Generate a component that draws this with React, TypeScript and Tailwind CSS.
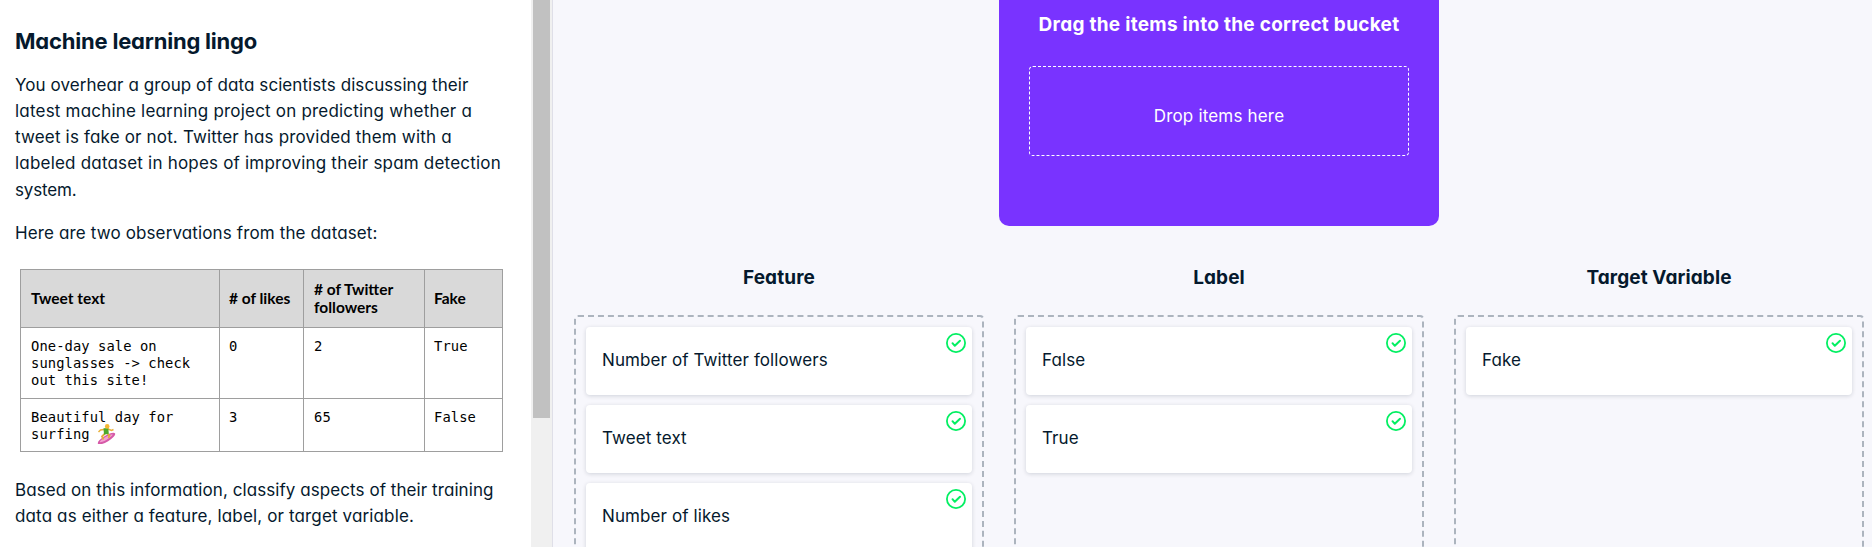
type Line = { text: string; spacing: string };

const intro: Line[] = [
  { text: "You overhear a group of data scientists discussing their", spacing: "tracking-[0.07px]" },
  { text: "latest machine learning project on predicting whether a", spacing: "tracking-[0.2px]" },
  { text: "tweet is fake or not. Twitter has provided them with a", spacing: "tracking-[0.17px]" },
  { text: "labeled dataset in hopes of improving their spam detection", spacing: "tracking-[0.2px]" },
  { text: "system.", spacing: "tracking-[-0.15px]" },
];
const observations: Line[] = [
  { text: "Here are two observations from the dataset:", spacing: "tracking-[0.13px]" },
];
const task: Line[] = [
  { text: "Based on this information, classify aspects of their training", spacing: "tracking-[0.07px]" },
  { text: "data as either a feature, label, or target variable.", spacing: "tracking-[0.14px]" },
];

const buckets = [
  { title: "Feature", items: ["Number of Twitter followers", "Tweet text", "Number of likes"] },
  { title: "Label", items: ["False", "True"] },
  { title: "Target Variable", items: ["Fake"] },
];

function Paragraph({ lines, className }: { lines: Line[]; className: string }) {
  return (
    <p className={`text-[17px] leading-[26.15px] whitespace-nowrap ${className}`}>
      {lines.map((l) => (
        <span key={l.text} className={`block ${l.spacing}`}>{l.text}</span>
      ))}
    </p>
  );
}

function Surfer() {
  return (
    <svg viewBox="0 0 19 20" className="absolute left-[66px] top-[15px] h-[20px] w-[19px]">
      <ellipse cx="9.5" cy="14.6" rx="10" ry="3.1" transform="rotate(-31 9.5 14.6)" fill="#d65aa8" />
      <ellipse cx="9.3" cy="14.2" rx="7.4" ry="1.4" transform="rotate(-31 9.3 14.2)" fill="#f3a0d2" />
      <path d="M7.5 10 L5 12.5 L6.5 15.5 M10.5 10 L12.5 11.5 L11.5 14" fill="none" stroke="#e3aa3c" strokeWidth="1.8" />
      <path d="M7 5.5 L3.5 6 L1.5 8 M11 5 L14.5 6.5 L16.5 5.5" fill="none" stroke="#eab13c" strokeWidth="1.5" />
      <path d="M6.5 4.2 L11.3 4 L11.8 9.8 L7 10.8 Z" fill="#4fa82c" />
      <circle cx="10.2" cy="2.4" r="2.3" fill="#f5b733" />
    </svg>
  );
}

function CheckIcon() {
  return (
    <svg viewBox="0 0 20 20" className="absolute top-[6px] right-[6px] h-5 w-5" fill="none" stroke="#03ef62">
      <circle cx="10" cy="10" r="9.1" strokeWidth="1.8" />
      <path d="M6.5 10.2 L8.8 12.8 L14 7.8" strokeWidth="2" strokeLinecap="round" strokeLinejoin="round" />
    </svg>
  );
}

function ObservationsTable() {
  return (
    <table className="mt-[23px] ml-[5px] w-[482px] table-fixed border-collapse text-left text-black">
      <colgroup>
        <col className="w-[199px]" />
        <col className="w-[84px]" />
        <col className="w-[121px]" />
        <col className="w-[78px]" />
      </colgroup>
      <thead className="bg-[#d9d9d9] font-['Lato',sans-serif] text-[15.5px] leading-[18.5px] font-bold whitespace-nowrap">
        <tr className="h-[58px]">
          <th className="border border-[#9e9e9e] pl-[10px]">Tweet text</th>
          <th className="border border-[#9e9e9e] pl-[9px]"># of likes</th>
          <th className="border border-[#9e9e9e] pl-[10px]"># of Twitter<br />followers</th>
          <th className="border border-[#9e9e9e] pl-[9px]">Fake</th>
        </tr>
      </thead>
      <tbody className="align-top font-['DejaVu_Sans_Mono',monospace] text-[13.8px] leading-[17px] tracking-[0.07px] whitespace-nowrap">
        <tr className="h-[71px]">
          <td className="border border-[#9e9e9e] pt-[10px] pl-[10px]">One-day sale on<br />sunglasses -&gt; check<br />out this site!</td>
          <td className="border border-[#9e9e9e] pt-[10px] pl-[9px]">0</td>
          <td className="border border-[#9e9e9e] pt-[10px] pl-[10px]">2</td>
          <td className="border border-[#9e9e9e] pt-[10px] pl-[9px]">True</td>
        </tr>
        <tr className="h-[53px]">
          <td className="border border-[#9e9e9e] pt-[10px] pl-[10px]">
            <div className="relative">Beautiful day for<br />surfing<Surfer /></div>
          </td>
          <td className="border border-[#9e9e9e] pt-[10px] pl-[9px]">3</td>
          <td className="border border-[#9e9e9e] pt-[10px] pl-[10px]">65</td>
          <td className="border border-[#9e9e9e] pt-[10px] pl-[9px]">False</td>
        </tr>
      </tbody>
    </table>
  );
}

export default function App() {
  return (
    <div className="flex h-[547px] w-[1872px] overflow-hidden bg-[#f7f7fc] font-['Inter',sans-serif] text-[#05192d] [font-feature-settings:'cv11']">
      <section className="w-[531px] shrink-0 bg-white pl-[15px]">
        <h1 className="mt-[27px] text-[22px] leading-[28px] font-bold tracking-[-0.2px]">Machine learning lingo</h1>
        <Paragraph lines={intro} className="mt-[17px]" />
        <Paragraph lines={observations} className="mt-[17px]" />
        <ObservationsTable />
        <Paragraph lines={task} className="mt-[25px]" />
      </section>
      <div className="w-[21px] shrink-0 bg-[#f0f0f0] pl-[2px]">
        <div className="h-[418px] w-[17px] bg-[#c1c1c1]" />
      </div>
      <main className="flex grow flex-col border-l border-[#dfdfe8] pl-[21px]">
        <div className="ml-[425px] h-[226px] w-[440px] shrink-0 rounded-b-[10px] bg-[#7933ff] px-[30px] pt-[11px] text-center text-white">
          <h2 className="text-[19px] leading-[28px] font-bold tracking-[0.28px] whitespace-nowrap">Drag the items into the correct bucket</h2>
          <div className="mt-[27px] flex h-[90px] items-center justify-center rounded-[4px] border border-dashed border-white pt-[11px] text-[17px] tracking-[0.18px]">
            Drop items here
          </div>
        </div>
        <div className="mt-[38px] flex shrink-0 gap-[30px]">
          {buckets.map((bucket) => (
            <div key={bucket.title} className="w-[410px] shrink-0">
              <h3 className="text-center text-[19px] leading-[28px] font-bold tracking-[0.1px]">{bucket.title}</h3>
              <div className="mt-[23px] flex h-[400px] flex-col gap-[10px] rounded-[4px] border-2 border-dashed border-[#acb4be] p-[10px]">
                {bucket.items.map((item) => (
                  <div key={item} className="relative flex h-[68px] shrink-0 items-center rounded-[4px] bg-white pl-[16px] text-[17px] tracking-[0.1px] shadow-[0_1px_4px_rgba(5,25,45,0.16)]">
                    {item}
                    <CheckIcon />
                  </div>
                ))}
              </div>
            </div>
          ))}
        </div>
      </main>
    </div>
  );
}
